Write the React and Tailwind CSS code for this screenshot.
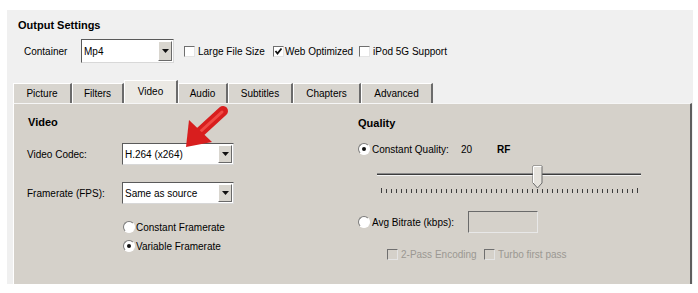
import React from 'react';

const FONT = "font-['Liberation_Sans',Arial,sans-serif]";

const Checkbox = ({ checked, disabled }) => (
  <span
    className={`inline-flex h-[11px] w-[11px] shrink-0 items-center justify-center border border-t-[#6f6f6f] border-l-[#6f6f6f] border-b-[#e4e4e4] border-r-[#e4e4e4] ${
      disabled ? 'bg-[#d5d1ca]' : 'bg-white'
    }`}
  >
    {checked && (
      <svg width="9" height="9" viewBox="0 0 9 9">
        <polyline points="1.5,4 3.5,6.5 7.5,1.5" fill="none" stroke="#111" strokeWidth="1.8" />
      </svg>
    )}
  </span>
);

const Radio = ({ checked }) => (
  <span className="inline-flex h-[12px] w-[12px] shrink-0 items-center justify-center rounded-full border border-t-[#7a7a7a] border-l-[#7a7a7a] border-b-white border-r-white bg-white">
    {checked && <span className="h-[4px] w-[4px] rounded-full bg-[#111]" />}
  </span>
);

const Select = ({ value, w, h }) => (
  <div
    className={`flex ${w} ${h} items-stretch border border-t-[#5a5a5a] border-l-[#5a5a5a] border-b-[#d8d8d8] border-r-[#d8d8d8] bg-white`}
  >
    <span className="flex flex-1 items-center pl-[2px] text-[10px] text-black">{value}</span>
    <span className="m-[1px] flex w-[14px] items-center justify-center border border-t-white border-l-white border-b-[#6a6a6a] border-r-[#6a6a6a] bg-[#d9d6cf]">
      <svg width="7" height="4" viewBox="0 0 7 4">
        <polygon points="0,0 7,0 3.5,4" fill="#111" />
      </svg>
    </span>
  </div>
);

const tabs = [
  { name: 'Picture', w: 'w-[59px]' },
  { name: 'Filters', w: 'w-[52px]' },
  { name: 'Video', w: 'w-[54px]', active: true },
  { name: 'Audio', w: 'w-[50px]' },
  { name: 'Subtitles', w: 'w-[65px]' },
  { name: 'Chapters', w: 'w-[68px]' },
  { name: 'Advanced', w: 'w-[72px]' },
];

const Slider = () => {
  const ticks = Array.from({ length: 52 }, (_, i) => 4 + i * (256 / 51));
  return (
    <svg width="270" height="32" viewBox="0 0 270 32">
      <line x1="0" y1="9.5" x2="264" y2="9.5" stroke="#8a8a8a" />
      <line x1="0" y1="10.5" x2="264" y2="10.5" stroke="#3c3c3c" />
      <line x1="0" y1="11.5" x2="264" y2="11.5" stroke="#f4f4f4" />
      {ticks.map((x, i) => (
        <line
          key={i}
          x1={Math.round(x) + 0.5}
          y1={i === 0 || i === 51 ? 24 : 25}
          x2={Math.round(x) + 0.5}
          y2="29"
          stroke="#3c3c3c"
        />
      ))}
      <polygon points="156,2 165,2 165,19 160.5,24 156,19" fill="#e6e3dd" stroke="#6a6a6a" />
      <polyline points="156.5,19 156.5,2.5 164.5,2.5" fill="none" stroke="#fff" />
    </svg>
  );
};

const App = () => (
  <div className={`relative h-[293px] w-[698px] bg-white pl-[7px] pt-[10px] ${FONT} text-black`}>
    <div className="flex h-[274px] w-[686px] flex-col bg-[#f0f0f0]">
      {/* Output Settings */}
      <div className="ml-[11px] mt-[8px] h-[14px] text-[11px] leading-[14px] font-bold">Output Settings</div>
      <div className="ml-[17px] mt-[7px] flex h-[24px] items-center text-[10px]">
        <span className="w-[57px]">Container</span>
        <Select value="Mp4" w="w-[93px]" h="h-[24px]" />
        <div className="ml-[10px] flex w-[89px] items-center gap-[3px]">
          <Checkbox />
          <span>Large File Size</span>
        </div>
        <div className="flex w-[86px] items-center gap-[1px]">
          <Checkbox checked />
          <span>Web Optimized</span>
        </div>
        <div className="flex items-center gap-[3px]">
          <Checkbox />
          <span>iPod 5G Support</span>
        </div>
      </div>

      {/* Tabs */}
      <div className="ml-[6px] mt-[17px] flex h-[23px] items-end text-[10px]">
        {tabs.map((t) => (
          <div
            key={t.name}
            className={`flex ${t.w} items-center justify-center border-l border-t border-r-2 border-l-white border-t-white border-r-[#6b6b6b] ${
              t.active ? 'h-[23px] bg-[#ebe9e4] pb-[2px]' : 'h-[20px] bg-[#d8d5cf]'
            }`}
          >
            {t.name}
          </div>
        ))}
      </div>

      {/* Panel */}
      <div className="ml-[6px] flex h-[181px] w-[679px] border-l border-t border-r-2 border-l-white border-t-[#f6f6f6] border-r-[#5e5e5e] bg-[#d5d1ca] text-[10px]">
        <div className="flex w-[331px] flex-col pl-[13px]">
          <div className="mt-[11px] h-[14px] pl-[1px] text-[11px] leading-[14px] font-bold">Video</div>
          <div className="mt-[14px] flex items-center">
            <span className="w-[95px]">Video Codec:</span>
            <Select value="H.264 (x264)" w="w-[112px]" h="h-[22px]" />
          </div>
          <div className="mt-[17px] flex items-center">
            <span className="w-[95px]">Framerate (FPS):</span>
            <Select value="Same as source" w="w-[112px]" h="h-[22px]" />
          </div>
          <div className="ml-[96px] mt-[16px] flex h-[14px] items-center gap-[1px]">
            <Radio />
            <span>Constant Framerate</span>
          </div>
          <div className="ml-[96px] mt-[5px] flex h-[14px] items-center gap-[1px]">
            <Radio checked />
            <span>Variable Framerate</span>
          </div>
        </div>

        <div className="flex flex-1 flex-col pl-[13px]">
          <div className="mt-[12px] h-[14px] text-[11px] leading-[14px] font-bold">Quality</div>
          <div className="mt-[12px] flex h-[14px] items-center">
            <Radio checked />
            <span className="ml-[2px] w-[89px]">Constant Quality:</span>
            <span className="w-[36px]">20</span>
            <span className="font-bold">RF</span>
          </div>
          <div className="ml-[19px] mt-[8px]">
            <Slider />
          </div>
          <div className="mt-[15px] flex h-[22px] items-center">
            <Radio />
            <span className="ml-[2px] w-[96px]">Avg Bitrate (kbps):</span>
            <span className="h-[22px] w-[70px] border border-t-[#6a6a6a] border-l-[#6a6a6a] border-b-[#e8e8e8] border-r-[#e8e8e8] bg-[#d5d1ca]" />
          </div>
          <div className="ml-[29px] mt-[14px] flex h-[14px] items-center text-[#9b9892]">
            <div className="flex w-[97px] items-center gap-[3px]">
              <Checkbox disabled />
              <span>2-Pass Encoding</span>
            </div>
            <div className="flex items-center gap-[3px]">
              <Checkbox disabled />
              <span>Turbo first pass</span>
            </div>
          </div>
        </div>
      </div>
    </div>

    {/* red callout arrow */}
    <svg className="pointer-events-none absolute left-0 top-0" width="698" height="293" viewBox="0 0 698 293">
      <line x1="223" y1="111" x2="199" y2="133" stroke="#d81e1e" strokeWidth="10" strokeLinecap="round" />
      <line x1="222" y1="112" x2="201" y2="131" stroke="#f04a45" strokeWidth="3" strokeLinecap="round" />
      <polygon points="186,147 189,120 212,142" fill="#d81e1e" />
    </svg>
  </div>
);

export default App;
